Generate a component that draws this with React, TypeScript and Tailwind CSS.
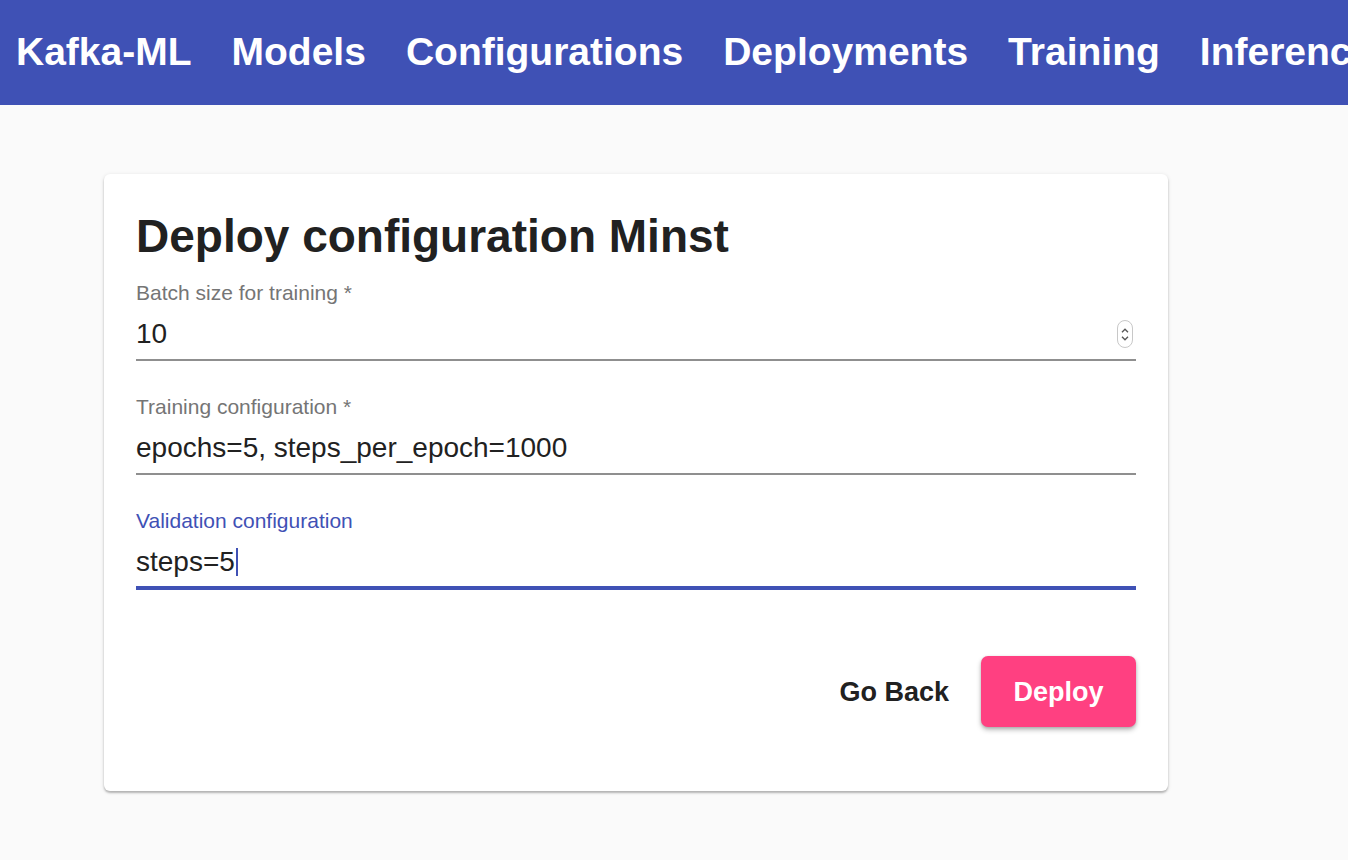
const navItems = ["Kafka-ML", "Models", "Configurations", "Deployments", "Training", "Inference"]

function Spinner() {
  return (
    <div className="flex h-[28px] w-[16px] flex-col items-center justify-center gap-[3px] rounded-full border border-[#c8c8c8] bg-white">
      <svg width="8" height="5" viewBox="0 0 8 5" fill="none">
        <path d="M1 4.2 4 1.2 7 4.2" stroke="#555" strokeWidth="1.3" />
      </svg>
      <svg width="8" height="5" viewBox="0 0 8 5" fill="none">
        <path d="M1 0.8 4 3.8 7 0.8" stroke="#555" strokeWidth="1.3" />
      </svg>
    </div>
  )
}

type FieldProps = {
  label: string
  value: string
  focused?: boolean
  number?: boolean
}

function Field({ label, value, focused, number }: FieldProps) {
  return (
    <div>
      <div
        className={`text-[21px] leading-[24px] ${focused ? "text-[#3f51b5]" : "text-[#757575]"}`}
      >
        {label}
      </div>
      <div className="mt-[11px] flex h-[36px] items-center justify-between">
        <div className="flex items-center text-[28px] leading-[36px] text-[#212121]">
          {value}
          {focused && <span className="ml-[1px] inline-block h-[28px] w-[2px] bg-[#3f51b5]" />}
        </div>
        {number && (
          <div className="mr-[3px]">
            <Spinner />
          </div>
        )}
      </div>
      <div className="mt-[7px] h-[2px] bg-[#8f8f8f]">
        {focused && <div className="h-[4px] -translate-y-[1px] bg-[#3f51b5]" />}
      </div>
    </div>
  )
}

export default function App() {
  return (
    <div
      className="min-h-[860px] bg-[#fafafa]"
      style={{ fontFamily: '"Liberation Sans", Arial, sans-serif' }}
    >
      <header className="flex h-[105px] items-center gap-[40px] overflow-hidden whitespace-nowrap bg-[#3f51b5] pl-[16px]">
        {navItems.map((item) => (
          <span key={item} className="text-[39px] font-bold text-white">
            {item}
          </span>
        ))}
      </header>

      <main className="pt-[69px] pl-[104px]">
        <div className="w-[1064px] rounded-[6px] bg-white px-[32px] pt-[35px] pb-[64px] shadow-[0_2px_2px_rgba(0,0,0,0.22),0_1px_4px_rgba(0,0,0,0.12)]">
          <h1 className="text-[46px] font-bold leading-[55px] text-[#212121]">
            Deploy configuration Minst
          </h1>

          <div className="mt-[17px] flex flex-col gap-[34px]">
            <Field label="Batch size for training *" value="10" number />
            <Field label="Training configuration *" value="epochs=5, steps_per_epoch=1000" />
            <Field label="Validation configuration" value="steps=5" focused />
          </div>

          <div className="mt-[67px] flex items-center justify-end gap-[32px]">
            <button className="pt-[2px] text-[27px] font-bold text-[#212121]">Go Back</button>
            <button className="flex h-[71px] w-[155px] items-center justify-center rounded-[7px] bg-[#ff4081] pt-[2px] text-[27px] font-bold text-white shadow-[0_3px_5px_rgba(0,0,0,0.25),0_1px_3px_rgba(0,0,0,0.15)]">
              Deploy
            </button>
          </div>
        </div>
      </main>
    </div>
  )
}
